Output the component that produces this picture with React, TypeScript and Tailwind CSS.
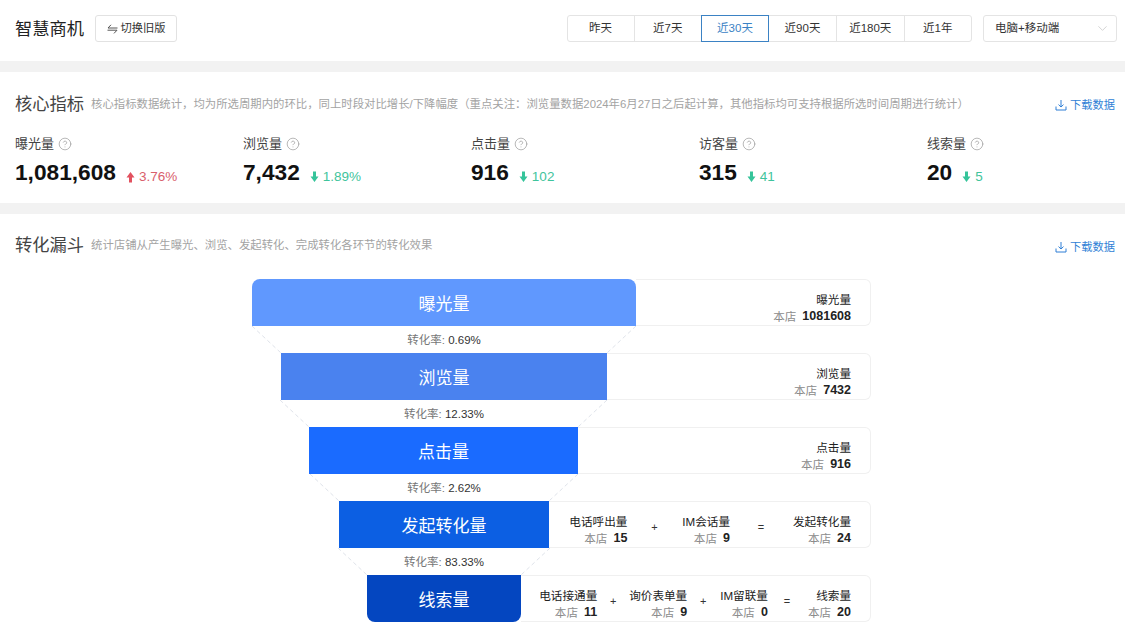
import { ChevronDown, CircleHelp } from 'lucide-react'

const font = 'font-["Liberation_Sans","Noto_Sans_CJK_SC",sans-serif]'

const ranges = ['昨天', '近7天', '近30天', '近90天', '近180天', '近1年']

const metrics = [
  { label: '曝光量', value: '1,081,608', delta: '3.76%', up: true },
  { label: '浏览量', value: '7,432', delta: '1.89%', up: false },
  { label: '点击量', value: '916', delta: '102', up: false },
  { label: '访客量', value: '315', delta: '41', up: false },
  { label: '线索量', value: '20', delta: '5', up: false },
]

type Stat = { title: string; value: string; op?: string; opClass?: string }

type Stage = {
  name: string
  barClass: string
  rate?: string
  // x offsets of the dashed funnel edges, left and right, going down to the next bar
  edges?: [number, number]
  stats: Stat[]
}

const stages: Stage[] = [
  {
    name: '曝光量',
    barClass: 'ml-0 w-[384px] rounded-t-[8px] bg-[#6098fe]',
    rate: '0.69%',
    edges: [29, 355],
    stats: [{ title: '曝光量', value: '1081608' }],
  },
  {
    name: '浏览量',
    barClass: 'ml-[29px] w-[326px] bg-[#4a82ef]',
    rate: '12.33%',
    edges: [57, 326],
    stats: [{ title: '浏览量', value: '7432' }],
  },
  {
    name: '点击量',
    barClass: 'ml-[57px] w-[269px] bg-[#1a6bff]',
    rate: '2.62%',
    edges: [87, 297],
    stats: [{ title: '点击量', value: '916' }],
  },
  {
    name: '发起转化量',
    barClass: 'ml-[87px] w-[210px] bg-[#0c5fe3]',
    rate: '83.33%',
    edges: [115, 269],
    stats: [
      { title: '电话呼出量', value: '15', op: '+', opClass: 'ml-[23px] mr-[24px]' },
      { title: 'IM会话量', value: '9', op: '=', opClass: 'ml-[27px] mr-[28px]' },
      { title: '发起转化量', value: '24' },
    ],
  },
  {
    name: '线索量',
    barClass: 'ml-[115px] w-[154px] rounded-b-[8px] bg-[#0446c0]',
    stats: [
      { title: '电话接通量', value: '11', op: '+', opClass: 'ml-[12px] mr-[12px]' },
      { title: '询价表单量', value: '9', op: '+', opClass: 'ml-[12px] mr-[13px]' },
      { title: 'IM留联量', value: '0', op: '=', opClass: 'ml-[15px] mr-[17px]' },
      { title: '线索量', value: '20' },
    ],
  },
]

function DownloadLink() {
  return (
    <a className="flex items-center gap-[3px] text-[11.25px] text-[#2f7fd6]">
      <svg width="12" height="12" viewBox="0 0 12 12" fill="none" stroke="currentColor" strokeWidth="1">
        <path d="M6 1v7M3.5 5.6 6 8l2.5-2.4M1 7.5V11h10V7.5" />
      </svg>
      下载数据
    </a>
  )
}

function Arrow({ up }: { up: boolean }) {
  return (
    <svg
      width="9"
      height="12"
      viewBox="0 0 9 12"
      className={up ? 'text-[#e2515f]' : 'rotate-180 text-[#35c49a]'}
      fill="currentColor"
    >
      <path d="M4.5 1 8.5 6.5H6V11.5H3V6.5H.5Z" />
    </svg>
  )
}

function StatCell({ title, value }: Stat) {
  return (
    <div className="flex flex-col items-end text-[11.6px] leading-[17px]">
      <span className="text-[#222]">{title}</span>
      <span className="flex gap-[6px]">
        <span className="text-[#8c8c8c]">本店</span>
        <b className="text-[12.5px] text-[#222]">{value}</b>
      </span>
    </div>
  )
}

export default function App() {
  return (
    <div className={`h-[636px] w-[1125px] overflow-hidden bg-white ${font}`}>
      <header className="flex h-[61px] items-start pt-[15px] pr-[8px] pl-[15px]">
        <h1 className="pt-[1px] text-[17.25px] leading-[27px] font-normal text-[#222]">智慧商机</h1>
        <button className="ml-[11px] flex h-[27px] w-[82px] items-center justify-center gap-[3px] rounded-[3px] border border-[#e2e2e2] text-[11.25px] text-[#333]">
          <svg width="11" height="10" viewBox="0 0 11 10" fill="none" stroke="#555" strokeWidth="1">
            <path d="M4 .8 1 4H10.5M.5 6.2H10L7 9.4" />
          </svg>
          切换旧版
        </button>
        <div className="ml-auto flex h-[27px] rounded-[3px] border border-[#e4e4e4]">
          {ranges.map((range, i) => (
            <div
              key={range}
              className={
                range === '近30天'
                  ? 'relative -my-px flex w-[68px] items-center justify-center border border-[#3b82c4] text-[11.5px] text-[#3b82c4]'
                  : i === 0
                    ? 'flex w-[66px] items-center justify-center text-[11.5px] text-[#333]'
                    : i === 3
                      ? 'flex w-[67px] items-center justify-center text-[11.5px] text-[#333]'
                      : 'flex w-[67.5px] items-center justify-center border-l border-[#e4e4e4] text-[11.5px] text-[#333]'
              }
            >
              {range}
            </div>
          ))}
        </div>
        <div className="ml-[11px] flex h-[27px] w-[134px] items-center justify-between rounded-[3px] border border-[#e4e4e4] pr-[6px] pl-[11px] text-[11.5px] text-[#333]">
          电脑+移动端
          <ChevronDown className="size-[15px] text-[#c4c4c4]" strokeWidth={1.2} />
        </div>
      </header>

      <div className="h-[11px] bg-[#f2f2f2]" />

      <section className="h-[131px] pr-[10px] pl-[15px]">
        <div className="flex h-[64px] items-center pt-[1px]">
          <h2 className="text-[17.25px] font-normal text-[#444]">核心指标</h2>
          <p className="ml-[7px] text-[11.38px] text-[#a3a3a3]">
            核心指标数据统计，均为所选周期内的环比，同上时段对比增长/下降幅度（重点关注：浏览量数据2024年6月27日之后起计算，其他指标均可支持根据所选时间周期进行统计）
          </p>
          <div className="ml-auto mt-[1px]">
            <DownloadLink />
          </div>
        </div>
        <div className="flex">
          {metrics.map((metric) => (
            <div key={metric.label} className="w-[228px] shrink-0">
              <div className="flex h-[15px] items-center gap-[4px] text-[13px] text-[#444]">
                {metric.label}
                <CircleHelp className="size-[14px] text-[#999]" strokeWidth={1.2} />
              </div>
              <div className="mt-[8px] flex h-[27px] items-center">
                <span className="text-[22.7px] font-bold text-[#111]">{metric.value}</span>
                <span className="ml-[10px] mt-[9px] flex items-center gap-[4px]">
                  <Arrow up={metric.up} />
                  <span className={metric.up ? 'text-[13.5px] text-[#d9606c]' : 'text-[13.5px] text-[#3fc49c]'}>
                    {metric.delta}
                  </span>
                </span>
              </div>
            </div>
          ))}
        </div>
      </section>

      <div className="h-[11px] bg-[#f2f2f2]" />

      <section className="pr-[10px] pl-[15px]">
        <div className="flex h-[65px] items-start pt-[20px]">
          <h2 className="text-[17.25px] leading-[22px] font-normal text-[#444]">转化漏斗</h2>
          <p className="ml-[7px] pt-[1px] text-[11.38px] leading-[20px] text-[#a3a3a3]">
            统计店铺从产生曝光、浏览、发起转化、完成转化各环节的转化效果
          </p>
          <div className="ml-auto mt-[5px]">
            <DownloadLink />
          </div>
        </div>

        <div className="ml-[237px] w-[619px]">
          {stages.map((stage) => (
            <div key={stage.name}>
              <div className="flex h-[47px]">
                <div
                  className={`flex shrink-0 items-center justify-center pt-[5px] text-[17px] text-white ${stage.barClass}`}
                >
                  {stage.name}
                </div>
                <div className="flex flex-1 items-center justify-end rounded-r-[6px] border border-l-0 border-[#f0f0f0] pt-[11px] pr-[19px]">
                  {stage.stats.map((stat) => (
                    <div key={stat.title} className="flex items-center">
                      <StatCell {...stat} />
                      {stat.op && <span className={`-mt-[6px] w-[8px] text-center text-[11px] text-[#333] ${stat.opClass}`}>{stat.op}</span>}
                    </div>
                  ))}
                </div>
              </div>
              {stage.rate && stage.edges && (
                <div className="relative flex h-[27px] w-[384px] items-center justify-center pt-[2px] text-[11.5px] text-[#777]">
                  <span>
                    转化率: <span className="text-[#333]">{stage.rate}</span>
                  </span>
                  <svg className="absolute inset-0" width="384" height="27" fill="none" stroke="#dfe3ea" strokeDasharray="4 3">
                    <path
                      d={`M${stage.edges[0] - 29} 0 ${stage.edges[0]} 27M${stage.edges[1] + 29} 0 ${stage.edges[1]} 27`}
                    />
                  </svg>
                </div>
              )}
            </div>
          ))}
        </div>
      </section>
    </div>
  )
}
